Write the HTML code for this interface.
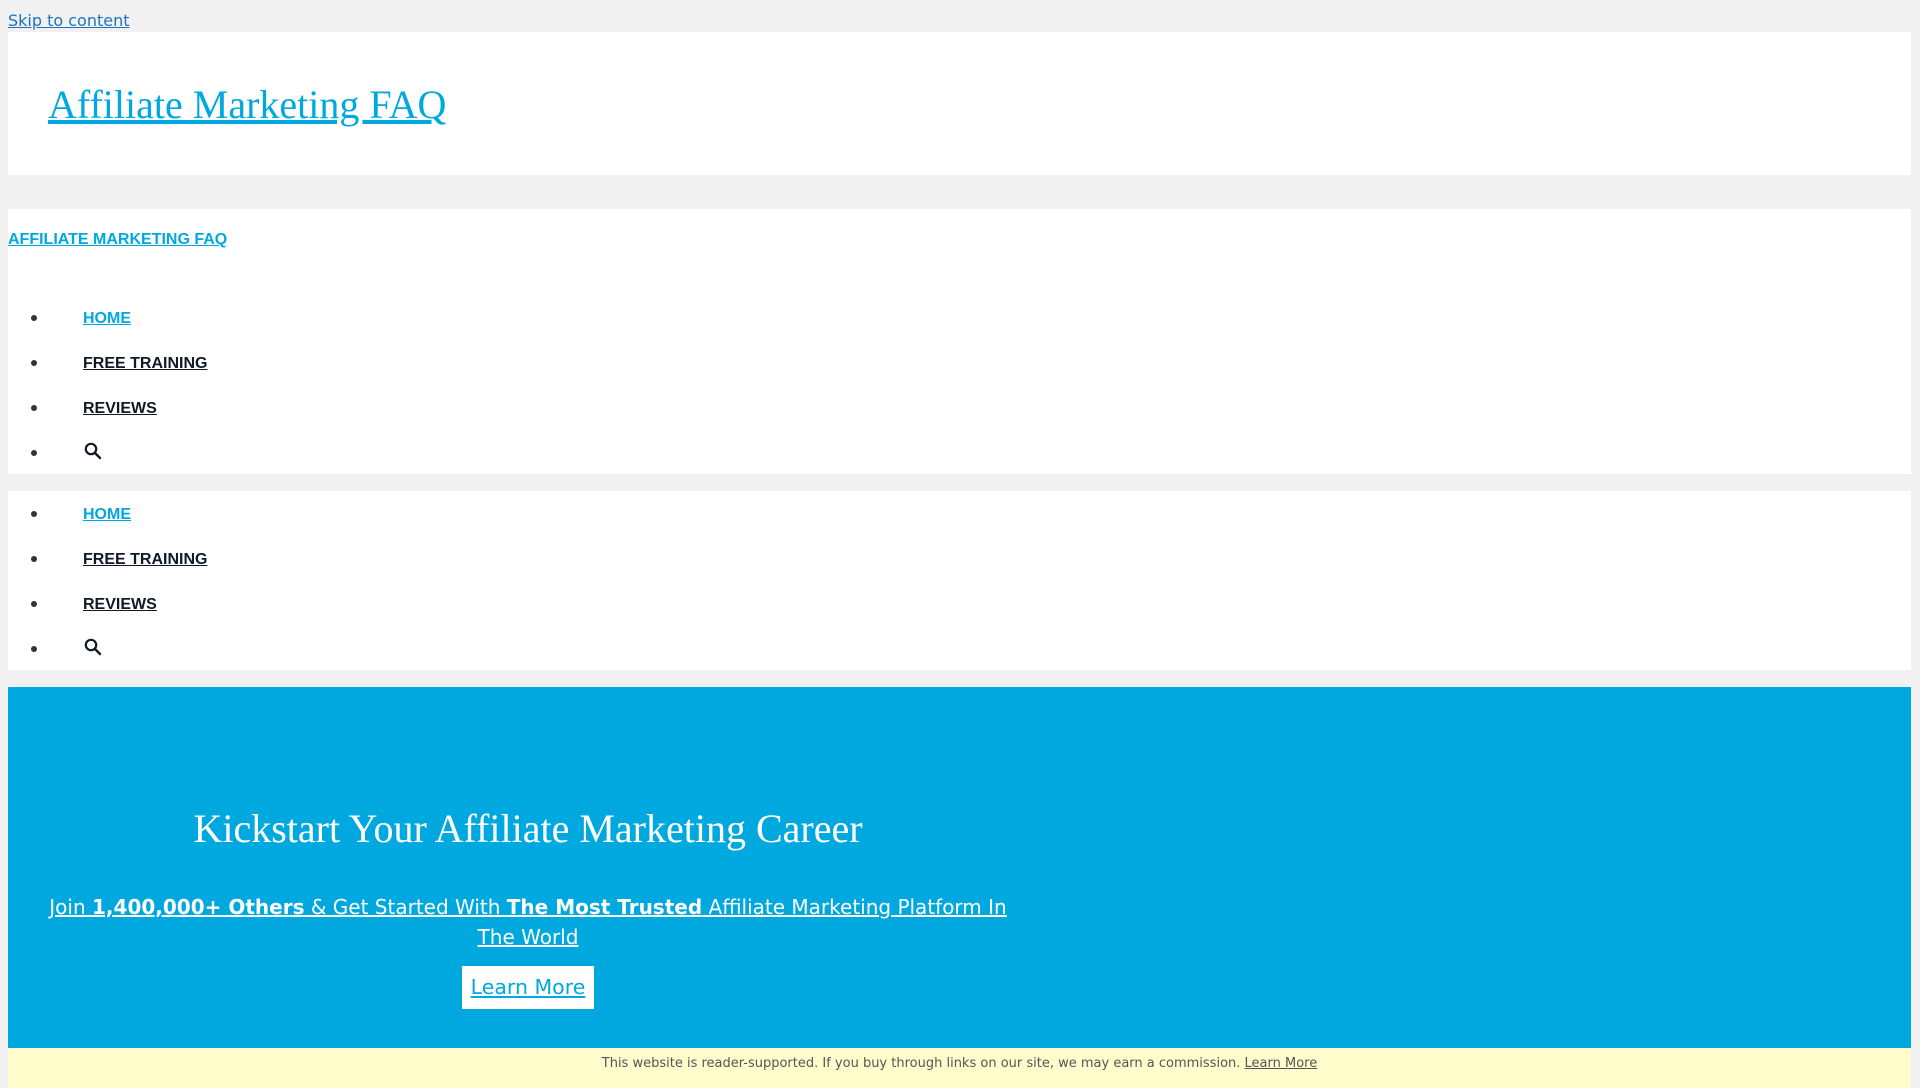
<!DOCTYPE html>
<html><head><meta charset="utf-8"><style>
*{margin:0;padding:0;box-sizing:border-box}
body{width:1920px;height:1080px;background:#f1f1f1;position:relative;overflow:hidden;font-family:"DejaVu Sans",sans-serif}
a{color:#00a8e0}
.abs{position:absolute}
.box{position:absolute;left:8px;width:1903px;background:#fff}
.nav{font-family:"Liberation Sans",sans-serif;font-weight:bold;font-size:16px}
.nav a{color:#0f1a26}
.nav a.cur{color:#00a8e0}
.dot{position:absolute;left:31px;width:6px;height:6px;border-radius:50%;background:#333}
</style></head><body>
<a class="abs" href="#" style="left:8px;top:11px;font-size:16px;color:#1e73be">Skip to content</a>
<div class="box" style="top:32px;height:143px"></div>
<a class="abs" href="#" style="left:48px;top:79px;font-family:'Liberation Serif',serif;font-size:40px;line-height:52px">Affiliate Marketing FAQ</a>
<div class="box" style="top:209px;height:265px"></div>
<a class="abs nav" href="#" style="left:8px;top:231px;color:#00a8e0">AFFILIATE MARKETING FAQ</a>
<div class="box" style="top:491px;height:179px"></div>

<div class="nav">
<span class="dot" style="top:315px"></span><a class="abs cur" href="#" style="left:83px;top:310px">HOME</a>
<span class="dot" style="top:360px"></span><a class="abs" href="#" style="left:83px;top:355px">FREE TRAINING</a>
<span class="dot" style="top:405px"></span><a class="abs" href="#" style="left:83px;top:400px">REVIEWS</a>
<span class="dot" style="top:450px"></span>
<svg class="abs" style="left:84px;top:442px" width="18" height="18" viewBox="0 0 18 18"><circle cx="7" cy="7" r="5.2" fill="none" stroke="#0f1a26" stroke-width="2.2"/><path d="M11 11l5 5" stroke="#0f1a26" stroke-width="2.4" stroke-linecap="round"/></svg>

<span class="dot" style="top:511px"></span><a class="abs cur" href="#" style="left:83px;top:506px">HOME</a>
<span class="dot" style="top:556px"></span><a class="abs" href="#" style="left:83px;top:551px">FREE TRAINING</a>
<span class="dot" style="top:601px"></span><a class="abs" href="#" style="left:83px;top:596px">REVIEWS</a>
<span class="dot" style="top:646px"></span>
<svg class="abs" style="left:84px;top:638px" width="18" height="18" viewBox="0 0 18 18"><circle cx="7" cy="7" r="5.2" fill="none" stroke="#0f1a26" stroke-width="2.2"/><path d="M11 11l5 5" stroke="#0f1a26" stroke-width="2.4" stroke-linecap="round"/></svg>
</div>

<div class="abs" style="left:8px;top:687px;width:1903px;height:400px;background:#00a8e0"></div>
<div class="abs" style="left:48px;top:802px;width:960px;text-align:center;color:#fff;font-family:'Liberation Serif',serif;font-size:40px;line-height:54px">Kickstart Your Affiliate Marketing Career</div>
<div class="abs" style="left:40px;top:892px;width:976px;text-align:center;font-size:20px;line-height:30px"><a href="#" style="color:#fff">Join <b>1,400,000+ Others</b> &amp; Get Started With <b>The Most Trusted</b> Affiliate Marketing Platform In The World</a></div>
<div class="abs" style="left:462px;top:966px;width:132px;height:43px;background:#fff;text-align:center;font-size:20.5px;line-height:43px"><a href="#">Learn More</a></div>

<div class="abs" style="left:8px;top:1048px;width:1903px;height:40px;background:#fffdcc;text-align:center;font-size:13px;line-height:32px;color:#555">This website is reader-supported. If you buy through links on our site, we may earn a commission. <a href="#" style="color:#555">Learn More</a></div>
</body></html>
